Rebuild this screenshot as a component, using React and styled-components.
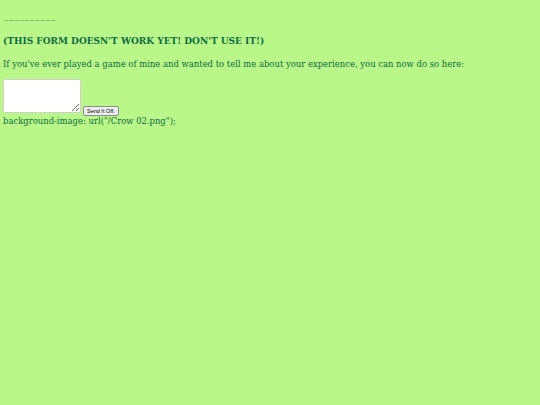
import React from "react";
import styled, { createGlobalStyle } from "styled-components";

const Global = createGlobalStyle`
  html, body { margin: 0; padding: 0; background: #b8f788; }
  body {
    padding: 0 3px;
    font-family: "DejaVu Serif Condensed", "DejaVu Serif", serif;
    color: #0f6c43;
  }
`;

const Dashes = styled.div`
  font-size: 9.4px;
  line-height: 12px;
  padding-top: 9px;
  letter-spacing: 1px;
  margin-left: 1px;
`;

const Heading = styled.h2`
  font-size: 10px;
  font-weight: bold;
  margin: 0;
  padding-top: 13px;
  line-height: 14px;
`;

const Para = styled.p`
  font-size: 9.4px;
  margin: 0;
  padding-top: 9px;
  line-height: 14px;
`;

const Form = styled.form`
  margin-top: 8px;
  display: flex;
  align-items: flex-end;
  gap: 2px;
`;

const Area = styled.textarea`
  width: 78px;
  height: 34px;
  box-sizing: border-box;
  border: 1px solid #cfcfcf;
  border-radius: 2px;
  background: #fff;
  margin: 0;
  padding: 2px;
  resize: both;
`;

const Button = styled.button`
  font-family: "Liberation Sans", Arial, sans-serif;
  font-size: 5.5px;
  height: 10px;
  padding: 0 3px;
  margin: 0 0 -3px;
  line-height: 8px;
  background: #efefef;
  color: #000;
  border: 1px solid #8a8a8a;
  border-radius: 2px;
`;

const Note = styled.div`
  font-size: 9.4px;
  line-height: 13px;
  margin-top: 1px;
`;

export default function App() {
  return (
    <>
      <Global />
      <Dashes>__________</Dashes>
      <Heading>(THIS FORM DOESN'T WORK YET! DON'T USE IT!)</Heading>
      <Para>If you've ever played a game of mine and wanted to tell me about your experience, you can now do so here:</Para>
      <Form onSubmit={(e) => e.preventDefault()}>
        <Area />
        <Button type="submit">Send It Off.</Button>
      </Form>
      <Note>background-image: url("/Crow 02.png");</Note>
    </>
  );
}
